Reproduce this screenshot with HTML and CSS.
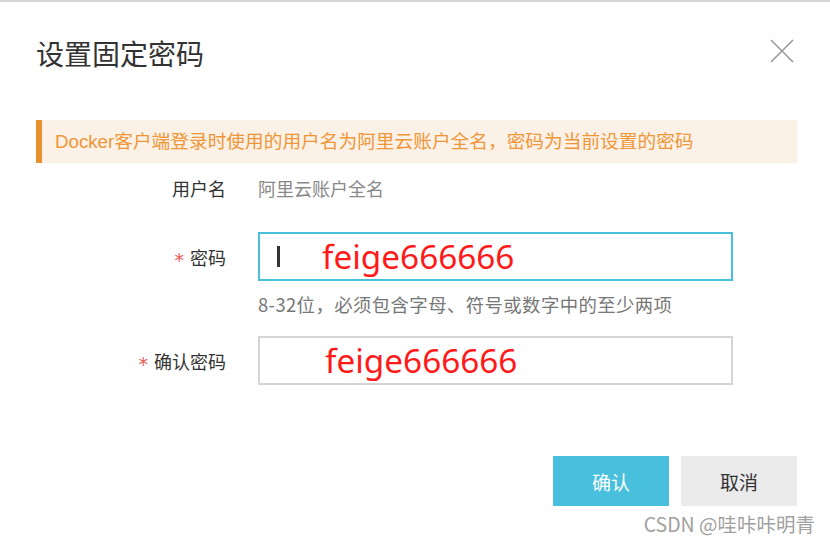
FILE: index.html
```html
<!DOCTYPE html>
<html lang="zh-CN">
<head>
    <meta charset="UTF-8">
    <meta name="viewport" content="width=device-width, initial-scale=1.0">
    <title>设置固定密码</title>
    <link rel="stylesheet" href="styles.css">
</head>
<body>
    <div class="dialog">
        <div class="dialog-header">
            <h2 class="dialog-title">设置固定密码</h2>
            <span class="dialog-close">
                <svg width="24" height="24" viewBox="0 0 24 24">
                    <path d="M1 1 L23 23 M23 1 L1 23" stroke="#9a9a9a" stroke-width="1.6" fill="none"/>
                </svg>
            </span>
        </div>

        <div class="alert">Docker客户端登录时使用的用户名为阿里云账户全名，密码为当前设置的密码</div>

        <div class="form">
            <div class="form-row row-user">
                <label class="form-label">用户名</label>
                <div class="form-text">阿里云账户全名</div>
            </div>

            <div class="form-row row-pass">
                <label class="form-label"><span class="required">*</span>密码</label>
                <div class="field focused">
                    <span class="caret"></span>
                    <span class="mark">feige666666</span>
                </div>
            </div>
            <div class="form-hint">8-32位，必须包含字母、符号或数字中的至少两项</div>

            <div class="form-row row-confirm">
                <label class="form-label"><span class="required">*</span>确认密码</label>
                <div class="field">
                    <span class="mark mark-confirm">feige666666</span>
                </div>
            </div>
        </div>

        <div class="dialog-footer">
            <button class="btn btn-primary">确认</button>
            <button class="btn btn-default">取消</button>
        </div>

        <div class="watermark">CSDN @哇咔咔明青</div>
    </div>
</body>
</html>
```

FILE: styles.css
```css
/* Basic reset */
* {
    margin: 0;
    padding: 0;
    box-sizing: border-box;
}

body {
    background-color: #fff;
    font-family: "Noto Sans CJK SC", sans-serif;
    color: #333;
}

/* Dialog box */
.dialog {
    position: relative;
    width: 830px;
    height: 543px;
    border-top: 2px solid #d6d6d6;
}

.dialog-header {
    display: flex;
    justify-content: space-between;
    align-items: center;
    height: 104px;
    padding: 0 36px 0 36px;
}

.dialog-title {
    font-size: 28px;
    font-weight: normal;
    color: #333;
    margin-top: -2px;
}

.dialog-close {
    display: flex;
    margin-top: -6px;
}

/* Orange notice bar */
.alert {
    margin: 14px 33px 0 36px;
    height: 43px;
    line-height: 43px;
    padding-left: 13px;
    background-color: #fcf1e6;
    border-left: 6px solid #e8912c;
    color: #ee9638;
    font-family: "Liberation Sans", "Noto Sans CJK SC", sans-serif;
    font-size: 18.7px;
}

/* Form */
.form-row {
    display: grid;
    grid-template-columns: 226px 475px;
    column-gap: 32px;
    align-items: center;
}

.form-label {
    text-align: right;
    font-size: 18px;
    color: #333;
}

.required {
    color: #e85a5a;
    font-family: "DejaVu Sans", sans-serif;
    font-size: 19px;
    margin-right: 6px;
    position: relative;
    top: 2px;
}

.form-text {
    font-size: 18px;
    color: #888;
}

.row-user {
    height: 50px;
}

.row-pass {
    margin-top: 19px;
}

.row-confirm {
    margin-top: 20px;
}

.field {
    position: relative;
    height: 49px;
    border: 2px solid #d5d5d5;
    display: flex;
    align-items: center;
}

.field.focused {
    border-color: #48bfdc;
}

.caret {
    margin-left: 17px;
    width: 3px;
    height: 21px;
    background-color: #333;
}

.mark {
    position: absolute;
    left: 62px;
    top: 50%;
    transform: translateY(-52%);
    font-family: "Noto Sans", sans-serif;
    font-size: 33.3px;
    color: #ff1a1a;
}

.mark-confirm {
    left: 65px;
}

.form-hint {
    margin: 11px 0 0 258px;
    font-size: 18.4px;
    letter-spacing: 0.4px;
    color: #777;
    line-height: 24px;
}

/* Footer buttons */
.dialog-footer {
    display: flex;
    justify-content: flex-end;
    gap: 12px;
    margin: 71px 33px 0 0;
}

.btn {
    width: 116px;
    height: 50px;
    border: none;
    font-family: "Noto Sans CJK SC", sans-serif;
    font-size: 19px;
}

.btn-primary {
    background-color: #48bfdc;
    color: #fff;
}

.btn-default {
    background-color: #ebebeb;
    color: #333;
}

/* Watermark */
.watermark {
    position: absolute;
    right: 15px;
    bottom: 5px;
    font-size: 19.5px;
    color: #a0a0a0;
}
```
